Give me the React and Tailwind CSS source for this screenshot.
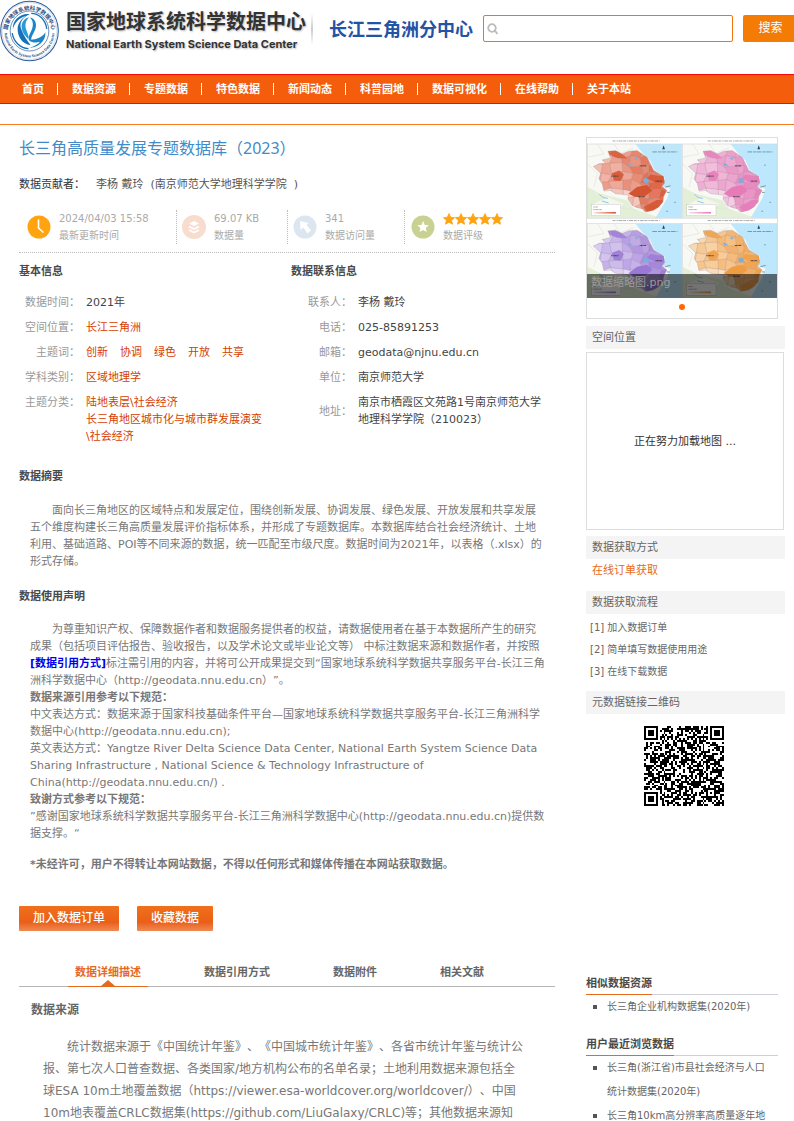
import React from 'react';

const NAV = ['首页', '数据资源', '专题数据', '特色数据', '新闻动态', '科普园地', '数据可视化', '在线帮助', '关于本站'];

const ABSTRACT = `面向长三角地区的区域特点和发展定位，围绕创新发展、协调发展、绿色发展、开放发展和共享发展
五个维度构建长三角高质量发展评价指标体系，并形成了专题数据库。本数据库结合社会经济统计、土地
利用、基础道路、POI等不同来源的数据，统一匹配至市级尺度。数据时间为2021年，以表格（.xlsx）的
形式存储。`;

const DETAIL = `统计数据来源于《中国统计年鉴》、《中国城市统计年鉴》、各省市统计年鉴与统计公
报、第七次人口普查数据、各类国家/地方机构公布的名单名录；土地利用数据来源包括全
球ESA 10m土地覆盖数据（https://viewer.esa-worldcover.org/worldcover/）、中国
10m地表覆盖CRLC数据集(https://github.com/LiuGalaxy/CRLC)等；其他数据来源知`;

const REGION =
  '62,22 85,20 105,30 125,22 150,20 165,30 180,40 190,60 200,80 230,98 233,118 225,128 240,140 230,158 228,175 215,190 200,200 175,205 165,195 150,192 135,185 122,165 125,155 105,152 85,150 70,140 50,142 45,120 35,105 40,88 18,68 35,60 55,58 45,48 70,42';

const CELLS = (() => {
  const cols = 8;
  const rows = 8;
  const point = (c, r) => {
    const jx = ((c * 37 + r * 53 + c * r * 11) % 17) - 8;
    const jy = ((c * 29 + r * 41 + c * r * 7) % 15) - 7;
    return `${12 + c * 30 + jx},${12 + r * 25 + jy}`;
  };
  const out = [];
  for (let r = 0; r < rows; r += 1) {
    for (let c = 0; c < cols; c += 1) {
      out.push({
        points: [point(c, r), point(c + 1, r), point(c + 1, r + 1), point(c, r + 1)].join(' '),
        tone: Math.max(0.05, ((c * 7 + r * 13 + c * r * 5) % 5) / 16 + c / 12 + 0.18 - (r > 4 && c < 5 ? 0.4 : 0)),
      });
    }
  }
  return out;
})();

function MapPanel({ x, y, id, light, mid, dark }) {
  return (
    <g transform={`translate(${x} ${y})`}>
      <defs>
        <clipPath id={`region-${id}`}>
          <polygon points={REGION} />
        </clipPath>
        <clipPath id={`frame-${id}`}>
          <rect width="285" height="224" />
        </clipPath>
        <linearGradient id={`legend-${id}`}>
          <stop offset="0" stopColor={light} />
          <stop offset="1" stopColor={dark} />
        </linearGradient>
      </defs>
      <g clipPath={`url(#frame-${id})`}>
        <rect width="285" height="224" fill="#f8f8f4" />
        <path d="M0 130L40 150L80 160L120 170L140 195L180 210L225 224H0Z" fill="#e3efd6" />
        <path d="M20 180L60 160L110 180L80 210Z" fill="#f4f7ee" />
        <path d="M0 60L30 90L20 130M30 0L50 30L0 40M80 0L100 28L140 12M60 224L90 190L150 200" stroke="#dfe5da" strokeWidth="2" fill="none" />
        <path d="M145 0L165 25L190 50L202 78L234 100L226 128L250 135L240 165L225 190L205 224H285V0Z" fill="#bde7fd" />
        <path d="M36 152l12 10l14 2M44 172l20 6" stroke="#8cc8ea" strokeWidth="3" fill="none" />
        <polygon points={REGION} fill={light} />
        <g clipPath={`url(#region-${id})`}>
          {CELLS.map((cell) => (
            <polygon key={cell.points} points={cell.points} fill={mid} fillOpacity={cell.tone} stroke="#817b80" strokeWidth="1" strokeOpacity="0.4" />
          ))}
          <path d="M62 22L85 20L110 34L120 44L90 42L66 32Z" fill={dark} opacity=".75" />
          <path d="M74 88L96 80L110 92L100 112L80 110Z" fill={dark} opacity=".85" />
          <path d="M124 150L150 130L180 124L196 140L176 156L145 160Z" fill={dark} />
          <path d="M190 92L230 98L233 118L205 116L180 104Z" fill={dark} opacity=".8" />
          <path d="M170 190L210 168L230 170L215 192L180 206Z" fill={dark} opacity=".85" />
        </g>
        <polygon points={REGION} fill="none" stroke="#a3989b" strokeWidth="1" />
        <path d="M168 106l10-4 8 8-6 8-10-2zM120 58l12 2 6 6-10 0zM142 44l10-4 0 8z" fill="#79aee0" />
        <path d="M72 97h22M158 66h20M206 112h20M152 159h22" stroke="#403840" strokeWidth="3" strokeDasharray="3 1" />
        <path d="M196 24h76" stroke="#5b7080" strokeWidth="2" strokeDasharray="14 3 9 2" />
        <path d="M230 4l4 12h-8z" fill="#2f3e48" />
        <path d="M246 64h5M240 146h8M235 130l16-4M262 176h5M238 203h5" stroke="#7c98a4" strokeWidth="3" />
        <rect x="13" y="182" width="88" height="34" fill="#fff" stroke="#b0b0b0" />
        <path d="M18 190h14M18 198h26" stroke="#777" strokeWidth="2" strokeDasharray="3 1" />
        <rect x="20" y="205" width="66" height="5" fill={`url(#legend-${id})`} />
      </g>
      <rect width="285" height="224" fill="none" stroke="#d4d8da" strokeWidth="2" />
      <path d="M76 -9H218" stroke="#aaa" strokeWidth="3" strokeDasharray="9 3 4 2 12 2" />
    </g>
  );
}

function Thumbnail() {
  return (
    <svg viewBox="0 0 573 483" className="block w-full" role="img" aria-label="数据缩略图">
      <rect width="573" height="483" fill="#fff" />
      <MapPanel id="a" x={1} y={18} light="#fbdcd6" mid="#de5f40" dark="#d4542f" />
      <MapPanel id="b" x={288} y={18} light="#f7dcec" mid="#e684bc" dark="#e67bb8" />
      <MapPanel id="c" x={1} y={258} light="#ece4fb" mid="#a180d8" dark="#9a78d6" />
      <MapPanel id="d" x={288} y={258} light="#fdebd2" mid="#f0a04c" dark="#ef9d45" />
    </svg>
  );
}

const QR_PATH = (() => {
  const n = 41;
  const finder = (x, y) => {
    const ring = Math.max(Math.abs(x - 3), Math.abs(y - 3));
    return ring === 3 || ring <= 1;
  };
  let seed = 20231;
  let d = '';
  for (let y = 0; y < n; y += 1) {
    for (let x = 0; x < n; x += 1) {
      seed = (seed * 48271) % 2147483647;
      let on = seed % 100 < 54;
      if (x < 8 && y < 8) on = x < 7 && y < 7 && finder(x, y);
      else if (x >= n - 8 && y < 8) on = x > n - 8 && y < 7 && finder(x - n + 7, y);
      else if (x < 8 && y >= n - 8) on = x < 7 && y > n - 8 && finder(x, y - n + 7);
      else if (Math.abs(x - 34) <= 2 && Math.abs(y - 34) <= 2) on = Math.max(Math.abs(x - 34), Math.abs(y - 34)) !== 1;
      else if (x === 6) on = y % 2 === 0;
      else if (y === 6) on = x % 2 === 0;
      if (on) d += `M${x} ${y}h1v1h-1z`;
    }
  }
  return d;
})();

function Emblem() {
  return (
    <svg viewBox="0 0 174 180" className="h-[62px] w-[59px] shrink-0" role="img" aria-label="国家地球系统科学数据中心">
      <defs>
        <path id="arc-top" d="M22 108A66 68 0 1 1 152 108" />
        <path id="arc-bottom" d="M13 90A74 78 0 0 0 161 90" />
      </defs>
      <ellipse cx="87" cy="90" rx="85" ry="88" fill="#fff" stroke="#2c5b9c" strokeWidth="3" />
      <ellipse cx="87" cy="90" rx="81" ry="84" fill="none" stroke="#7f9cc6" strokeWidth="1" />
      <ellipse cx="87" cy="90" rx="57" ry="59" fill="#fff" stroke="#2c5b9c" strokeWidth="2" />
      <text fontSize="16" fontWeight="700" fill="#27497f" fontFamily="Noto Sans CJK SC, sans-serif">
        <textPath href="#arc-top" startOffset="50%" textAnchor="middle">国家地球系统科学数据中心</textPath>
      </text>
      <text fontSize="11" fontWeight="700" fill="#27497f" fontFamily="Liberation Sans, sans-serif">
        <textPath href="#arc-bottom" startOffset="50%" textAnchor="middle">National Earth System Science Data Center</textPath>
      </text>
      <path d="M38 84C36 58 60 36 88 40C66 50 54 68 64 88C70 104 80 118 90 132C66 128 52 108 52 84C52 70 62 54 76 46C58 50 44 64 38 84Z" fill="#1672b8" />
      <path d="M88 50C106 52 112 74 100 94C96 102 92 108 92 116C104 116 124 110 134 94C136 122 110 140 86 140C100 136 112 130 118 122C106 126 94 124 86 118C82 110 88 98 92 90C100 74 98 58 88 50Z" fill="#1a86c8" />
      <path d="M64 82C62 62 74 50 86 50C76 58 72 72 78 88C82 100 86 106 84 114C74 104 66 96 64 82Z" fill="#2a9ad6" />
      <path d="M36 96C40 122 60 140 84 142M138 84C134 56 114 38 92 38" fill="none" stroke="#1672b8" strokeWidth="4" />
    </svg>
  );
}

function ClockIcon() {
  return (
    <svg viewBox="0 0 24 24" className="size-6" aria-hidden="true">
      <circle cx="12" cy="12" r="11.5" fill="#ffa30f" />
      <path d="M11.5 4.500V13L16.500 17.500" stroke="#fff" strokeWidth="1.600" fill="none" />
    </svg>
  );
}

function LayersIcon() {
  return (
    <svg viewBox="0 0 24 24" className="size-6" aria-hidden="true">
      <circle cx="12" cy="12" r="12" fill="#f8dccd" />
      <path d="M12 6L17 8.500L12 11L7 8.500Z" fill="#fff" />
      <path d="M7 11.500L12 14L17 11.500M7 15L12 17.500L17 15" stroke="#fff" strokeWidth="1.800" fill="none" />
    </svg>
  );
}

function ArrowIcon() {
  return (
    <svg viewBox="0 0 24 24" className="size-6" aria-hidden="true">
      <circle cx="12" cy="12" r="11.500" fill="#dbe6f1" />
      <path d="M7 6L15.500 8L13.500 10L18 15.500L14.500 18.500L10.500 12.500L7.500 15Z" fill="#fff" />
    </svg>
  );
}

const STAR = 'M12 2L15 8.800L22.300 9.500L16.800 14.400L18.400 21.600L12 17.800L5.600 21.600L7.200 14.400L1.700 9.500L9 8.800Z';

function StarBadge() {
  return (
    <svg viewBox="0 0 24 24" className="size-6" aria-hidden="true">
      <circle cx="12" cy="12" r="11.500" fill="#c8d191" />
      <path d={STAR} fill="#fff" transform="translate(5.400 5) scale(.56)" />
    </svg>
  );
}

function SectionTitle({ children, className = '' }) {
  return <h2 className={`leading-[17px] font-bold text-[#4a4a4a] ${className}`}>{children}</h2>;
}

function Row({ label, children }) {
  return (
    <>
      <dt className="self-center whitespace-nowrap text-right text-[#999]">{label}：</dt>
      <dd className="text-[#444]">{children}</dd>
    </>
  );
}

function LinkRow({ label, children }) {
  return (
    <>
      <dt className="whitespace-nowrap text-right text-[#999]">{label}：</dt>
      <dd className="flex gap-3 whitespace-nowrap text-[#d64000]">{children}</dd>
    </>
  );
}

function Stat({ icon, value, label }) {
  return (
    <div className="flex items-center gap-2 text-[10px] text-[#aaa]">
      {icon}
      <div className="whitespace-nowrap">
        <div>{value}</div>
        <div>{label}</div>
      </div>
    </div>
  );
}

function Bar({ children, className = '' }) {
  return <h2 className={`bg-[#f4f4f4] pl-[6px] leading-[23px] text-[#666] ${className}`}>{children}</h2>;
}

function ListTitle({ children, className = '' }) {
  return (
    <h2 className={`flex border-b border-[#cfcfd8] font-bold leading-5 text-[#4a4a4a] ${className}`}>
      <span className="-mb-px border-b border-[#e56a1c]">{children}</span>
    </h2>
  );
}

function ListItem({ children }) {
  return (
    <li className="flex gap-[10px] pl-[7px] text-[10px] leading-6">
      <span className="mt-[10px] size-1 shrink-0 bg-[#555]" />
      <a href="#item" className="whitespace-pre text-[#666]">{children}</a>
    </li>
  );
}

export default function App() {
  return (
    <div className="h-screen overflow-hidden bg-white text-[11px] leading-[17px] text-[#666] [font-family:'DejaVu_Sans','Noto_Sans_CJK_SC',sans-serif] [text-spacing-trim:space-all]">
      <header className="flex h-[74px] items-start">
        <Emblem />
        <div className="ml-[7px] mt-2 whitespace-nowrap [text-shadow:1px_1px_2px_#bbb]">
          <div className="text-[20px] font-bold leading-[29px] text-[#333]">国家地球系统科学数据中心</div>
          <div className="text-[11px] font-bold leading-[14px] text-[#333] [font-family:'Inter',sans-serif]">National Earth System Science Data Center</div>
        </div>
        <div className="ml-[5px] mt-[13px] h-8 w-[2px] bg-linear-to-b from-white via-[#ccc] to-white" />
        <div className="ml-4 mt-[17px] whitespace-nowrap text-[18px] font-bold leading-[26px] text-[#2353a4]">长江三角洲分中心</div>
        <form className="ml-auto mt-[15px] flex gap-[10px]" onSubmit={(event) => event.preventDefault()}>
          <label className="flex h-[27px] w-[250px] items-center rounded-[2px] border border-[#f5730b] px-[3px]">
            <svg viewBox="0 0 12 12" className="size-3 shrink-0" fill="none" stroke="#bbb" strokeWidth="1.800" aria-hidden="true">
              <circle cx="5" cy="5" r="3.800" />
              <path d="M7.700 7.700L10.500 10.800" />
            </svg>
            <input type="text" aria-label="搜索" className="min-w-0 flex-1 px-1 outline-none" />
          </label>
          <button type="submit" className="h-[27px] w-[51px] rounded-l-[2px] bg-[#f47c05] pl-1 text-[12px] text-white">搜索</button>
        </form>
      </header>

      <nav className="flex h-[30px] items-center border-y border-[#fa0a05] bg-[#f35d0b] pl-2">
        {NAV.map((name, index) => (
          <React.Fragment key={name}>
            {index > 0 && <span className="h-3 w-px bg-white" />}
            <a href="#nav" className="whitespace-nowrap pl-[14px] pr-[13px] font-bold text-white">{name}</a>
          </React.Fragment>
        ))}
      </nav>

      <div className="mt-5 flex gap-[31px] border-t border-[#f57d20] pl-[19px] pr-[9px]">
        <main className="min-w-0 flex-1">
          <h1 className="mt-[11px] text-[16px] leading-6 text-[#428bca] [font-family:'Noto_Sans','Noto_Sans_CJK_SC',sans-serif]">长三角高质量发展专题数据库（2023）</h1>
          <p className="mt-4 flex gap-[11px] whitespace-nowrap text-[#555]">
            <span className="w-[66px] text-[#333]">数据贡献者：</span>
            <span>李杨 戴玲&nbsp; (南京师范大学地理科学学院&nbsp; )</span>
          </p>

          <div className="mt-[17px] flex border-b border-dotted border-[#bbb] pb-2 pl-2">
            <div className="w-[150px] border-r border-dotted border-[#bbb]">
              <Stat icon={<ClockIcon />} value="2024/04/03 15:58" label="最新更新时间" />
            </div>
            <div className="w-[111px] border-r border-dotted border-[#bbb] pl-[5px]">
              <Stat icon={<LayersIcon />} value="69.07 KB" label="数据量" />
            </div>
            <div className="w-[117px] border-r border-dotted border-[#bbb] pl-[5px]">
              <Stat icon={<ArrowIcon />} value="341" label="数据访问量" />
            </div>
            <div className="pl-[6px]">
              <Stat
                icon={<StarBadge />}
                value={
                  <span className="flex h-[17px] items-center">
                    {[1, 2, 3, 4, 5].map((n) => (
                      <svg key={n} viewBox="1 1 22 22" className="size-3" fill="#ffa30f" aria-hidden="true">
                        <path d={STAR} stroke="#ffa30f" strokeWidth="1.500" />
                      </svg>
                    ))}
                  </span>
                }
                label="数据评级"
              />
            </div>
          </div>

          <div className="mt-[10px] flex">
            <section className="w-[272px]">
              <SectionTitle>基本信息</SectionTitle>
              <dl className="mt-[14px] grid grid-cols-[61px_1fr] gap-x-[6px] gap-y-2">
                <Row label="数据时间">2021年</Row>
                <LinkRow label="空间位置"><a href="#place">长江三角洲</a></LinkRow>
                <LinkRow label="主题词">
                  {['创新', '协调', '绿色', '开放', '共享'].map((word) => (
                    <a key={word} href="#word">{word}</a>
                  ))}
                </LinkRow>
                <LinkRow label="学科类别"><a href="#subject">区域地理学</a></LinkRow>
                <LinkRow label="主题分类">
                  <span>
                    <a href="#topic" className="block">陆地表层\社会经济</a>
                    <a href="#topic" className="block">长三角地区城市化与城市群发展演变<br />\社会经济</a>
                  </span>
                </LinkRow>
              </dl>
            </section>
            <section className="flex-1">
              <SectionTitle>数据联系信息</SectionTitle>
              <dl className="mt-[14px] grid grid-cols-[61px_1fr] gap-x-[6px] gap-y-2">
                <Row label="联系人">李杨 戴玲</Row>
                <Row label="电话">025-85891253</Row>
                <Row label="邮箱">geodata@njnu.edu.cn</Row>
                <Row label="单位">南京师范大学</Row>
                <Row label="地址">南京市栖霞区文苑路1号南京师范大学<br />地理科学学院（210023）</Row>
              </dl>
            </section>
          </div>

          <SectionTitle className="mt-[23px]">数据摘要</SectionTitle>
          <p className="ml-[11px] mt-[17px] whitespace-pre indent-[22px] text-[#777]">{ABSTRACT}</p>

          <SectionTitle className="mt-[18px]">数据使用声明</SectionTitle>
          <div className="ml-[11px] mt-4 whitespace-nowrap text-[#777]">
            <p className="indent-[22px]">
              为尊重知识产权、保障数据作者和数据服务提供者的权益，请数据使用者在基于本数据所产生的研究<br />
              成果（包括项目评估报告、验收报告，以及学术论文或毕业论文等） 中标注数据来源和数据作者，并按照<br />
              <a href="#cite" className="font-bold text-[#0000ee]">[数据引用方式]</a>
              标注需引用的内容，并将可公开成果提交到“国家地球系统科学数据共享服务平台-长江三角<br />
              洲科学数据中心（http://geodata.nnu.edu.cn）”。
            </p>
            <p className="font-bold">数据来源引用参考以下规范：</p>
            <p>
              中文表达方式：数据来源于国家科技基础条件平台—国家地球系统科学数据共享服务平台-长江三角洲科学<br />
              数据中心(http://geodata.nnu.edu.cn);
            </p>
            <p>
              英文表达方式：Yangtze River Delta Science Data Center, National Earth System Science Data<br />
              Sharing Infrastructure , National Science &amp; Technology Infrastructure of<br />
              China(http://geodata.nnu.edu.cn/) .
            </p>
            <p className="font-bold">致谢方式参考以下规范：</p>
            <p>
              ”感谢国家地球系统科学数据共享服务平台-长江三角洲科学数据中心(http://geodata.nnu.edu.cn)提供数<br />
              据支撑。“
            </p>
            <p className="mt-[14px] font-bold">*未经许可，用户不得转让本网站数据，不得以任何形式和媒体传播在本网站获取数据。</p>
          </div>

          <div className="mt-[33px] flex gap-[18px] text-[12px] font-medium text-white">
            <button type="button" className="h-[25px] rounded-[1px] bg-linear-to-b from-[#f0701c] via-[#ea5f17] via-65% to-[#ee8a50] px-[14px]">加入数据订单</button>
            <button type="button" className="h-[25px] rounded-[1px] bg-linear-to-b from-[#f0701c] via-[#ea5f17] via-65% to-[#ee8a50] px-[14px]">收藏数据</button>
          </div>

          <div className="mt-[27px] flex gap-[49px] border-b border-[#b5b5b5] pl-[49px] font-bold">
            <button type="button" className="relative -mb-px h-[29px] border-b border-[#e56a1c] px-[7px] text-[#e56a1c]">
              数据详细描述
              <svg viewBox="0 0 14 6" className="absolute bottom-0 left-[33px] h-[6px] w-[14px]" aria-hidden="true">
                <path d="M0 6L7 0L14 6Z" fill="#e56a1c" />
              </svg>
            </button>
            <button type="button" className="px-[7px]">数据引用方式</button>
            <button type="button" className="px-[7px]">数据附件</button>
            <button type="button" className="px-[7px]">相关文献</button>
          </div>

          <div className="text-[12px] leading-[22px] text-[#777]">
            <h3 className="ml-3 mt-3 font-bold text-[#666]">数据来源</h3>
            <p className="ml-6 mt-[15px] whitespace-pre indent-6">{DETAIL}</p>
          </div>
        </main>

        <aside className="w-[199px] shrink-0">
          <figure className="mt-3 h-[182px] w-[192px] border border-[#ddd]">
            <div className="relative">
              <Thumbnail />
              <figcaption className="absolute inset-x-0 bottom-0 bg-black/55 px-1 pb-[7px] text-[#9a9a9a]">数据缩略图.png</figcaption>
            </div>
            <button type="button" aria-label="第1张" className="mx-auto mt-[6px] block size-[6px] rounded-full bg-[#ff6a00]" />
          </figure>

          <Bar className="mt-[7px]">空间位置</Bar>
          <div className="mr-px mt-[3px] flex h-[178px] items-center justify-center border border-[#ddd] text-[#333]">正在努力加载地图 ...</div>

          <Bar className="mt-[6px]">数据获取方式</Bar>
          <a href="#order" className="mt-[3px] block pl-[6px] text-[#e56a1c]">在线订单获取</a>

          <Bar className="mt-3">数据获取流程</Bar>
          <ol className="mt-[3px] pl-1 text-[10px] leading-[22px]">
            <li>[1] 加入数据订单</li>
            <li>[2] 简单填写数据使用用途</li>
            <li>[3] 在线下载数据</li>
          </ol>

          <Bar className="mt-2">元数据链接二维码</Bar>
          <div className="mr-1 mt-3 flex justify-center">
            <svg viewBox="0 0 41 41" className="size-20" shapeRendering="crispEdges" role="img" aria-label="二维码">
              <path d={QR_PATH} fill="#000" />
            </svg>
          </div>

          <ListTitle className="mr-[7px] mt-[168px]">相似数据资源</ListTitle>
          <ul>
            <ListItem>长三角企业机构数据集(2020年)</ListItem>
          </ul>
          <ListTitle className="mr-[7px] mt-4">用户最近浏览数据</ListTitle>
          <ul>
            <ListItem>{'长三角(浙江省)市县社会经济与人口\n统计数据集(2020年)'}</ListItem>
            <ListItem>长三角10km高分辨率高质量逐年地</ListItem>
          </ul>
        </aside>
      </div>
    </div>
  );
}
